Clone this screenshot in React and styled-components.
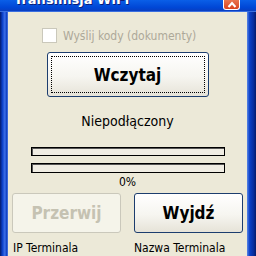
import React from "react";
import styled, { createGlobalStyle } from "styled-components";

const Global = createGlobalStyle`
  html, body { margin: 0; padding: 0; background: #ece9d8; }
  body { font-family: "DejaVu Sans Condensed", "DejaVu Sans", "Liberation Sans", sans-serif; }
`;

export default function App() {
  return (
    <Window>
      <Global />
      <TitleBar>
        <TitleText>Transmisja WiFi</TitleText>
        <CloseButton>
          <svg width="10" height="7" viewBox="0 0 10 7">
            <path d="M1.5 6 L5 2 L8.5 6" stroke="#fff" strokeWidth="2" fill="none" />
          </svg>
        </CloseButton>
      </TitleBar>
      <Frame>
        <Side />
        <Content>
          <CheckRow>
            <CheckBox />
            <CheckLabel>Wyślij kody (dokumenty)</CheckLabel>
          </CheckRow>
          <MainButton>
            <Focus>Wczytaj</Focus>
          </MainButton>
          <Status>Niepodłączony</Status>
          <Bar $h={9} />
          <Bar $h={10} $gap={7} />
          <Percent>0%</Percent>
          <ButtonRow>
            <ActionButton disabled>Przerwij</ActionButton>
            <ActionButton>Wyjdź</ActionButton>
          </ButtonRow>
          <LabelRow>
            <Label $w={121}>IP Terminala</Label>
            <Label>Nazwa Terminala</Label>
          </LabelRow>
        </Content>
        <Side $right />
      </Frame>
    </Window>
  );
}

const Window = styled.div`
  width: 256px;
  height: 256px;
  overflow: hidden;
  display: flex;
  flex-direction: column;
  background: #ece9d8;
`;

const TitleBar = styled.div`
  height: 11px;
  flex-shrink: 0;
  display: flex;
  align-items: flex-end;
  justify-content: space-between;
  background: linear-gradient(#0a5fe8, #0046d5 70%, #0a3fc0);
  border-bottom: 1px solid #3a6fe0;
`;

const TitleText = styled.span`
  color: #fff;
  font-family: "DejaVu Sans", sans-serif;
  font-weight: bold;
  font-size: 13px;
  line-height: 13px;
  margin-left: 14px;
  margin-bottom: 5px;
  text-shadow: 1px 1px 0 #0a1e7a;
`;

const CloseButton = styled.div`
  width: 15px;
  height: 9px;
  margin-right: 16px;
  margin-bottom: 1px;
  border: 1px solid #fff;
  border-top: none;
  border-radius: 0 0 3px 3px;
  background: linear-gradient(#e8754f, #d9431d);
  display: flex;
  align-items: center;
  justify-content: center;
`;

const Frame = styled.div`
  flex: 1;
  display: flex;
  min-height: 0;
`;

const Side = styled.div`
  width: ${(p) => (p.$right ? 9 : 8)}px;
  flex-shrink: 0;
  background: ${(p) =>
    p.$right
      ? "linear-gradient(90deg, #5a86e6, #0a3fc8 30%, #082a9a 75%, #041a6a)"
      : "linear-gradient(90deg, #041a6a, #0a3fc8 30%, #3b6ee8 60%, #0b3cc0 85%, #5a86e6)"};
`;

const Content = styled.div`
  flex: 1;
  min-width: 0;
  display: flex;
  flex-direction: column;
  align-items: center;
  padding-top: 16px;
`;

const CheckRow = styled.div`
  align-self: flex-start;
  margin-left: 34px;
  display: flex;
  align-items: center;
  gap: 6px;
  height: 15px;
`;

const CheckBox = styled.div`
  width: 13px;
  height: 13px;
  border: 1px solid #cac8bb;
  background: #fff;
`;

const CheckLabel = styled.span`
  color: #aca899;
  font-size: 12px;
`;

const MainButton = styled.div`
  margin-top: 9px;
  width: 162px;
  height: 45px;
  box-sizing: border-box;
  border: 1px solid #1c3d6e;
  border-radius: 3px;
  background: linear-gradient(#ffffff, #f6f5f0 55%, #e6e3d8);
  padding: 3px;
  display: flex;
`;

const Focus = styled.div`
  flex: 1;
  border: 1px dotted #000;
  display: flex;
  align-items: center;
  justify-content: center;
  font-size: 17px;
  font-weight: bold;
  color: #000;
`;

const Status = styled.div`
  margin-top: 16px;
  font-size: 14px;
  line-height: 16px;
  color: #000;
`;

const Bar = styled.div`
  margin-top: ${(p) => p.$gap ?? 18}px;
  width: 194px;
  height: ${(p) => p.$h}px;
  box-sizing: border-box;
  border: 1px solid #000;
  box-shadow: inset 1px 1px 0 #555;
  background: #f0ede3;
`;

const Percent = styled.div`
  margin-top: 2px;
  font-size: 12px;
  line-height: 14px;
  color: #000;
`;

const ButtonRow = styled.div`
  margin-top: 4px;
  align-self: stretch;
  padding: 0 4px;
  display: flex;
  justify-content: space-between;
`;

const ActionButton = styled.div`
  width: 109px;
  height: 40px;
  box-sizing: border-box;
  border: 1px solid ${(p) => (p.disabled ? "#cac8bb" : "#1c3d6e")};
  border-radius: 3px;
  background: ${(p) =>
    p.disabled ? "#f5f4ea" : "linear-gradient(#ffffff, #f6f5f0 55%, #e6e3d8)"};
  display: flex;
  align-items: center;
  justify-content: center;
  font-size: 17px;
  font-weight: bold;
  color: ${(p) => (p.disabled ? "#c5c2b2" : "#000")};
`;

const LabelRow = styled.div`
  margin-top: 8px;
  align-self: stretch;
  padding: 0 5px;
  display: flex;
`;

const Label = styled.span`
  ${(p) => (p.$w ? `width: ${p.$w}px; flex-shrink: 0;` : "flex: 1;")}
  white-space: nowrap;
  font-size: 12px;
  line-height: 14px;
  color: #000;
`;
